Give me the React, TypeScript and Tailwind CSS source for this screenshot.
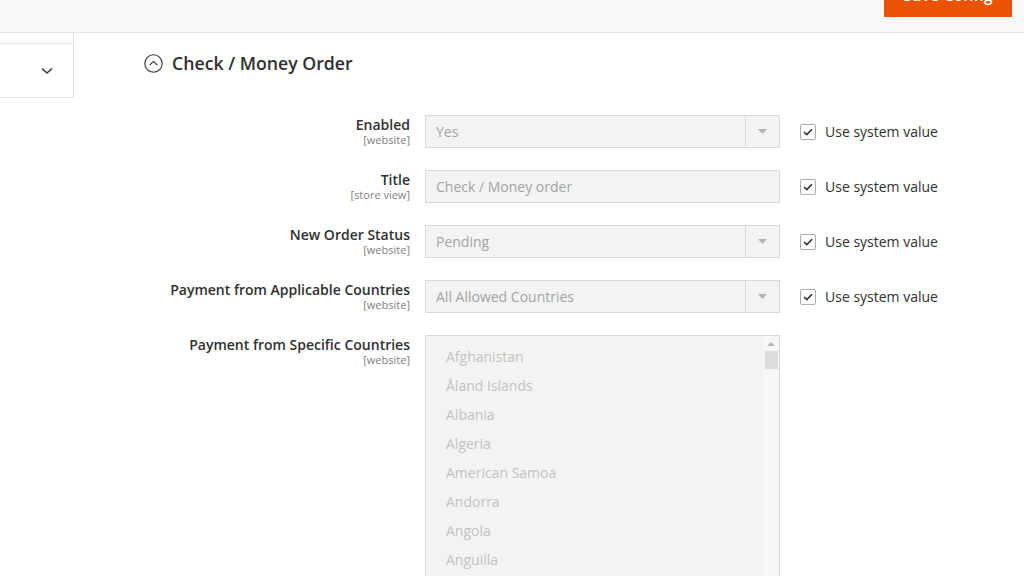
import React from "react";

const font = { fontFamily: '"Open Sans", "Liberation Sans", sans-serif' };

function Label({ title, scope }: { title: string; scope: string }) {
  return (
    <div className="w-[266px] shrink-0 text-right pt-[1px]">
      <div className="text-[14px] leading-[18px] font-semibold text-[#303030]">{title}</div>
      <div className="text-[11px] leading-[13px] text-[#808080] mt-[-1px]">{scope}</div>
    </div>
  );
}

function SysCheck() {
  return (
    <div className="flex items-center ml-[20px] h-[33px]">
      <div className="w-[16px] h-[16px] border border-[#adadad] rounded-[2px] bg-white flex items-center justify-center">
        <svg width="10" height="8" viewBox="0 0 10 8">
          <path d="M1 4 L3.8 6.6 L9 1.2" fill="none" stroke="#303030" strokeWidth="1.6" />
        </svg>
      </div>
      <span className="ml-[9px] text-[14px] text-[#303030]">Use system value</span>
    </div>
  );
}

function SelectBox({ value }: { value: string }) {
  return (
    <div className="w-[355px] h-[33px] border border-[#d9d9d9] bg-[#f3f3f3] flex items-center">
      <div className="flex-1 pl-[10px] text-[14px] text-[#a3a3a3]">{value}</div>
      <div className="w-[34px] h-full border-l border-[#d9d9d9] flex items-center justify-center">
        <svg width="9" height="5" viewBox="0 0 9 5">
          <path d="M0 0 L9 0 L4.5 5 Z" fill="#b3b3b3" />
        </svg>
      </div>
    </div>
  );
}

function TextBox({ value }: { value: string }) {
  return (
    <div className="w-[355px] h-[33px] border border-[#d9d9d9] bg-[#f3f3f3] flex items-center">
      <div className="pl-[10px] text-[14px] text-[#a3a3a3]">{value}</div>
    </div>
  );
}

const countries = [
  "Afghanistan",
  "Åland Islands",
  "Albania",
  "Algeria",
  "American Samoa",
  "Andorra",
  "Angola",
  "Anguilla",
  "Antarctica",
];

export default function App() {
  return (
    <div className="w-[1024px] h-[576px] overflow-hidden bg-white" style={font}>
      <div className="h-[33px] bg-[#f8f8f8] border-b border-[#e3e3e3] flex justify-end pr-[12px]">
        <div className="w-[128px] h-[17px] bg-[#eb5202] overflow-hidden flex justify-center">
          <span className="text-white text-[16px] font-semibold leading-[20px] mt-[-15px]">Save Config</span>
        </div>
      </div>
      <div className="flex">
        <div className="w-[74px] shrink-0 self-start border-r border-b border-[#e3e3e3]">
          <div className="h-[11px] border-b border-[#e3e3e3]" />
          <div className="h-[53px] flex items-center justify-end pr-[20px]">
            <svg width="12" height="8" viewBox="0 0 12 8">
              <path d="M1 1.5 L6 6 L11 1.5" fill="none" stroke="#41362f" strokeWidth="1.6" />
            </svg>
          </div>
        </div>
        <div className="flex-1 pl-[70px]">
          <div className="mt-[20px] h-[20px] flex items-center">
            <svg width="19" height="19" viewBox="0 0 19 19">
              <circle cx="9.5" cy="9.5" r="8.7" fill="none" stroke="#303030" strokeWidth="1.1" />
              <path d="M5.8 11 L9.5 7.4 L13.2 11" fill="none" stroke="#303030" strokeWidth="1.1" />
            </svg>
            <span className="ml-[9px] text-[17.7px] leading-[20px] font-semibold text-[#303030]">Check / Money Order</span>
          </div>
          <div className="mt-[42px] flex flex-col gap-[22px]">
            <div className="flex">
              <Label title="Enabled" scope="[website]" />
              <div className="ml-[15px]"><SelectBox value="Yes" /></div>
              <SysCheck />
            </div>
            <div className="flex">
              <Label title="Title" scope="[store view]" />
              <div className="ml-[15px]"><TextBox value="Check / Money order" /></div>
              <SysCheck />
            </div>
            <div className="flex">
              <Label title="New Order Status" scope="[website]" />
              <div className="ml-[15px]"><SelectBox value="Pending" /></div>
              <SysCheck />
            </div>
            <div className="flex">
              <Label title="Payment from Applicable Countries" scope="[website]" />
              <div className="ml-[15px]"><SelectBox value="All Allowed Countries" /></div>
              <SysCheck />
            </div>
            <div className="flex">
              <Label title="Payment from Specific Countries" scope="[website]" />
              <div className="ml-[15px] w-[355px] h-[300px] border border-[#d9d9d9] bg-[#f3f3f3] flex">
                <div className="flex-1 pt-[6px] pl-[20px]">
                  {countries.map((c) => (
                    <div key={c} className="h-[29px] flex items-center text-[14px] text-[#c2c2c2]">{c}</div>
                  ))}
                </div>
                <div className="w-[16px] bg-[#f7f7f7] flex flex-col items-center pt-[6px]">
                  <svg width="8" height="4" viewBox="0 0 8 4">
                    <path d="M0 4 L8 4 L4 0 Z" fill="#b5b5b5" />
                  </svg>
                  <div className="mt-[5px] w-[13px] h-[18px] bg-[#dcdcdc]" />
                </div>
              </div>
            </div>
          </div>
        </div>
      </div>
    </div>
  );
}
